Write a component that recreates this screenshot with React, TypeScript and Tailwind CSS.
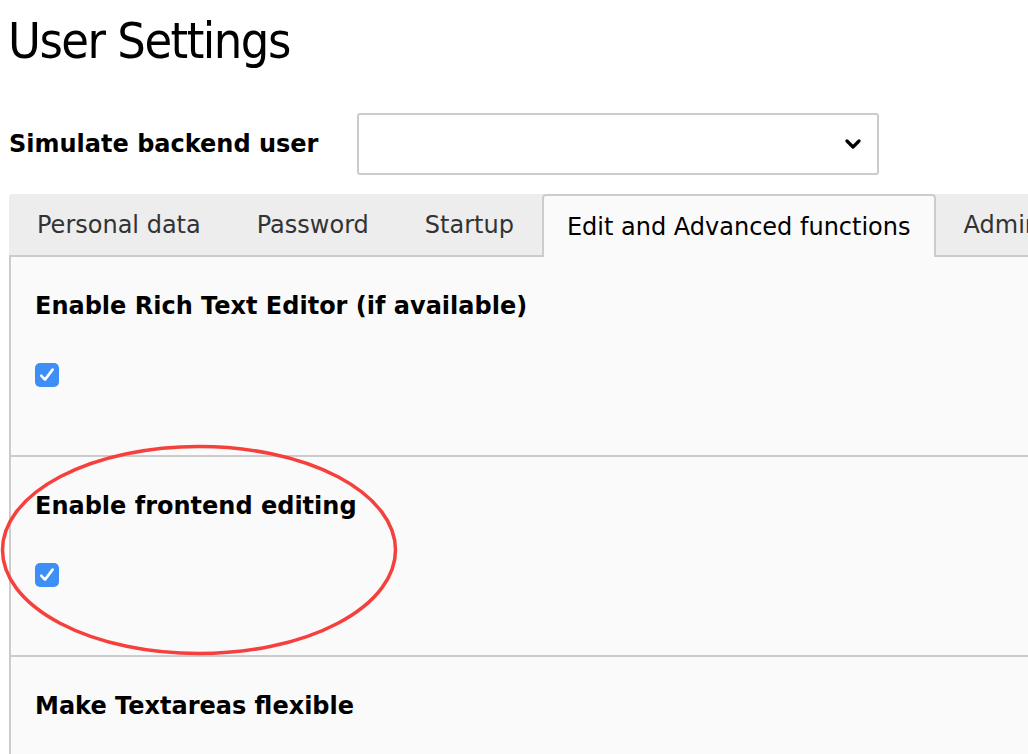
import React from 'react';

const tabs = ['Personal data', 'Password', 'Startup', 'Edit and Advanced functions', 'Admin functions'];
const activeTab = 3;

const options = [
  { label: 'Enable Rich Text Editor (if available)', checked: true },
  { label: 'Enable frontend editing', checked: true },
  { label: 'Make Textareas flexible', checked: true },
];

function Checkbox() {
  return (
    <span className="flex h-[24px] w-[24px] items-center justify-center rounded-[5px] bg-[#3d8ff5]">
      <svg width="24" height="24" viewBox="0 0 24 24" fill="none">
        <path d="M6.2 12.6 L10 16.6 L17.6 6.6" stroke="#fff" strokeWidth="2.6" strokeLinecap="round" strokeLinejoin="round" />
      </svg>
    </span>
  );
}

export default function App() {
  return (
    <div className="relative h-[754px] w-[1028px] overflow-hidden bg-white text-black" style={{ fontFamily: '"DejaVu Sans", Verdana, sans-serif' }}>
      <h1
        className="pl-[8px] pt-[12px] text-[50px] leading-[58px] tracking-[-1.5px]"
        style={{ fontFamily: '"DejaVu Sans Condensed", "Liberation Sans Narrow", "DejaVu Sans", sans-serif' }}
      >
        User Settings
      </h1>

      {/* simulate user */}
      <div className="mt-[43px] flex items-center pl-[9px]">
        <label className="w-[348px] text-[24px] font-bold leading-[28px]">Simulate backend user</label>
        <div className="flex h-[62px] w-[522px] items-center justify-end rounded-[3px] border-2 border-[#cccccc] bg-white pr-[16px]">
          <svg width="16" height="12" viewBox="0 0 16 12" fill="none">
            <path d="M2 3 L8 9 L14 3" stroke="#000" strokeWidth="3.2" strokeLinecap="round" strokeLinejoin="round" />
          </svg>
        </div>
      </div>

      {/* tabs */}
      <div className="ml-[9px] mt-[19px]">
        <div className="flex h-[63px] rounded-tl-[3px] border-b-2 border-[#cccccc] bg-[#ededed]">
          {tabs.map((t, i) =>
            i === activeTab ? (
              <div
                key={t}
                className="-mb-[2px] flex items-center whitespace-nowrap rounded-t-[4px] border-2 border-b-0 border-[#cccccc] bg-[#fafafa] px-[23px] text-[24px]"
              >
                {t}
              </div>
            ) : (
              <div key={t} className="flex items-center whitespace-nowrap border-x-2 border-transparent px-[26px] text-[24px] text-[#333333]">
                {t}
              </div>
            )
          )}
        </div>

        {/* panel */}
        <div className="border-l-2 border-[#cccccc] bg-[#fafafa]">
          {options.map((o) => (
            <div key={o.label} className="h-[200px] border-b-2 border-[#cccccc] pl-[24px] pt-[35px]">
              <div className="text-[24px] font-bold leading-[28px]">{o.label}</div>
              <div className="mt-[43px]">{o.checked && <Checkbox />}</div>
            </div>
          ))}
        </div>
      </div>

      {/* annotation */}
      <svg className="pointer-events-none absolute left-0 top-[444px]" width="400" height="214" viewBox="0 0 400 214" fill="none">
        <ellipse cx="199" cy="106" rx="196.5" ry="103.5" stroke="#f5403d" strokeWidth="3.5" />
      </svg>
    </div>
  );
}
